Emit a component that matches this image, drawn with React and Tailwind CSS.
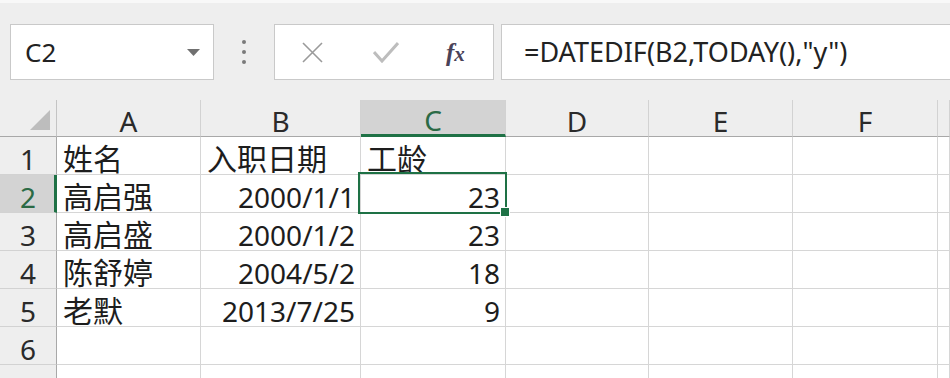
import React from "react";

const latin = "font-['Noto_Sans',sans-serif]";
const cjk = "font-['Noto_Sans_CJK_SC','Noto_Sans',sans-serif]";

// column widths include the 1px right gridline
const cols = [
  { key: "A", w: "w-[144px]" },
  { key: "B", w: "w-[160px]" },
  { key: "C", w: "w-[145px]" },
  { key: "D", w: "w-[143px]" },
  { key: "E", w: "w-[144px]" },
  { key: "F", w: "w-[145px]" },
  { key: "G", w: "flex-1" },
];

const rows = [
  ["姓名", "入职日期", "工龄"],
  ["高启强", "2000/1/1", "23"],
  ["高启盛", "2000/1/2", "23"],
  ["陈舒婷", "2004/5/2", "18"],
  ["老默", "2013/7/25", "9"],
  [],
  [],
];

const isNum = (v) => /^[0-9/]+$/.test(v);

function Cell({ value, w, active }) {
  const num = value && isNum(value);
  return (
    <div
      className={`relative h-[38px] shrink-0 ${w} border-r border-b border-[#d6d6d6] bg-white flex items-end ${
        num ? "justify-end pr-[5px]" : "justify-start pl-[6px]"
      } ${active ? "z-10" : ""}`}
    >
      {value ? (
        num ? (
          <span className={`${latin} text-[28px] leading-none pb-[1px] text-[#1d1d1d]`}>{value}</span>
        ) : (
          <span className={`${cjk} text-[30px] leading-none pb-[2px] text-[#1d1d1d] whitespace-nowrap`}>{value}</span>
        )
      ) : null}
      {active && (
        <>
          <div className="absolute left-[-3px] top-[-3px] w-[149px] h-[42px] border-[2.5px] border-[#1e7145] pointer-events-none" />
          <div className="absolute left-[139px] top-[32px] w-[10px] h-[10px] bg-[#1e7145] border border-white" />
        </>
      )}
    </div>
  );
}

function Toolbar() {
  return (
    <div className="h-[100px] bg-[#eeeeee] border-t-[3px] border-[#f8f8f8] flex items-start pt-[21px]">
      {/* name box */}
      <div className="ml-[10px] w-[204px] h-[56px] bg-white border border-[#c9c9c9] flex items-center justify-between pl-[14px] pr-[13px]">
        <span className={`${latin} text-[26px] text-[#222]`}>C2</span>
        <svg width="13" height="7" viewBox="0 0 13 7">
          <path d="M0 0 L13 0 L6.5 7 Z" fill="#707070" />
        </svg>
      </div>
      {/* grip dots */}
      <div className="w-[60px] h-[56px] flex flex-col items-center justify-center gap-[6px]">
        <div className="w-[4px] h-[4px] rounded-full bg-[#7a7a7a]" />
        <div className="w-[4px] h-[4px] rounded-full bg-[#7a7a7a]" />
        <div className="w-[4px] h-[4px] rounded-full bg-[#7a7a7a]" />
      </div>
      {/* cancel / enter / fx */}
      <div className="w-[220px] h-[56px] bg-white border border-[#c9c9c9] flex items-center">
        <svg className="ml-[27px]" width="21" height="21" viewBox="0 0 21 21">
          <path d="M1 1 L20 20 M20 1 L1 20" stroke="#9a9a9a" strokeWidth="1.6" fill="none" />
        </svg>
        <svg className="ml-[50px]" width="26" height="22" viewBox="0 0 26 22">
          <path d="M1 11 L9 20 L25 2" stroke="#bdbdbd" strokeWidth="3" fill="none" strokeLinejoin="miter" />
        </svg>
        <span className="ml-[47px] font-['Liberation_Serif',serif] italic font-bold text-[25px] leading-none text-[#4a4258]">
          f<span className="text-[21px]">x</span>
        </span>
      </div>
      {/* formula box */}
      <div className="ml-[7px] flex-1 h-[56px] bg-white border border-r-0 border-[#c9c9c9] flex items-center pl-[22px]">
        <span className={`${latin} text-[27px] text-[#222] whitespace-nowrap`}>=DATEDIF(B2,TODAY(),"y")</span>
      </div>
    </div>
  );
}

function HeaderRow() {
  return (
    <div className="flex">
      <div className="w-[57px] h-[37px] shrink-0 bg-[#eeeeee] border-r border-b border-r-[#c4c4c4] border-b-[#a8a8a8] flex items-end justify-end pr-[6px] pb-[6px]">
        <svg width="20" height="20" viewBox="0 0 20 20">
          <path d="M20 0 L20 20 L0 20 Z" fill="#bdbdbd" />
        </svg>
      </div>
      {cols.map((c) => {
        const sel = c.key === "C";
        return (
          <div
            key={c.key}
            className={`h-[37px] shrink-0 ${c.w} flex items-end justify-center border-r border-r-[#d2d2d2] ${
              sel ? "bg-[#d3d3d3] border-b-[3px] border-b-[#1e7145]" : "bg-[#eeeeee] border-b border-b-[#a8a8a8] pb-[1px]"
            }`}
          >
            <span className={`${latin} text-[28px] leading-none ${sel ? "text-[#2b6a45]" : "text-[#2a2a2a]"}`}>
              {c.key === "G" ? "" : c.key}
            </span>
          </div>
        );
      })}
    </div>
  );
}

export default function App() {
  return (
    <div className="w-[950px] h-[378px] overflow-hidden bg-white">
      <Toolbar />
      <HeaderRow />
      {rows.map((r, i) => {
        const n = i + 1;
        const sel = n === 2;
        return (
          <div key={n} className="flex">
            <div
              className={`w-[57px] h-[38px] shrink-0 flex items-end justify-center border-b border-b-[#d2d2d2] ${
                sel ? "bg-[#d3d3d3] border-r-[3px] border-r-[#1e7145] pl-[2px]" : "bg-[#eeeeee] border-r border-r-[#a8a8a8]"
              }`}
            >
              <span className={`${latin} text-[28px] leading-none pb-[1px] ${sel ? "text-[#2b6a45]" : "text-[#2a2a2a]"}`}>{n}</span>
            </div>
            {cols.map((c, j) => (
              <Cell key={c.key} w={c.w} value={r[j]} active={sel && c.key === "C"} />
            ))}
          </div>
        );
      })}
    </div>
  );
}
